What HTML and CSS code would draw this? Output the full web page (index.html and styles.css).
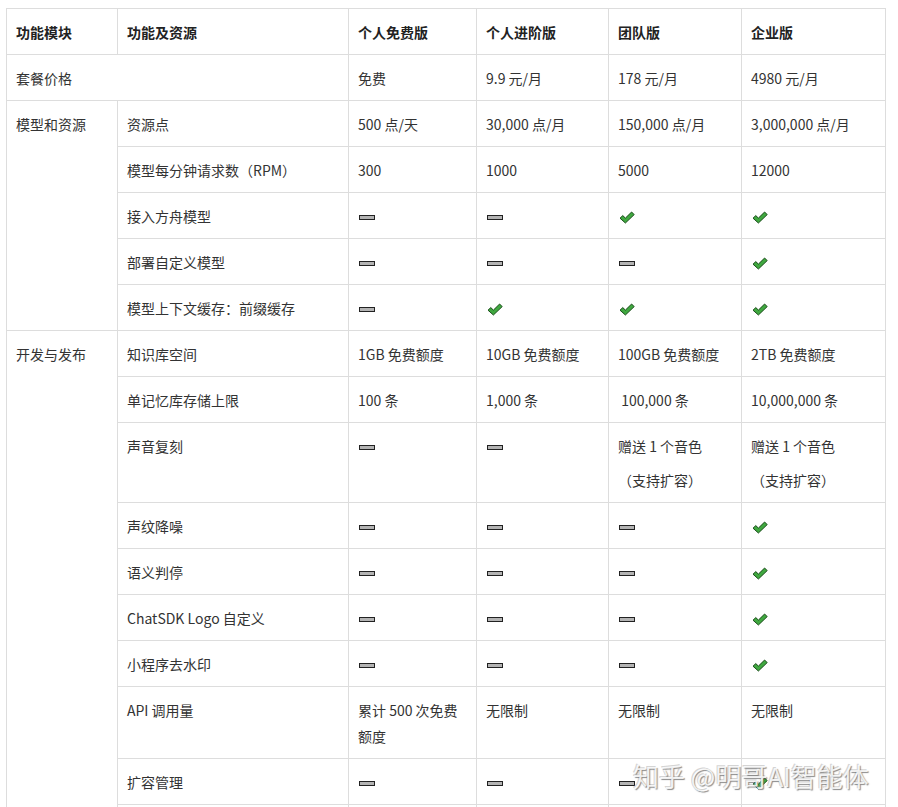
FILE: index.html
```html
<!DOCTYPE html>
<html lang="zh-CN">
<head>
<meta charset="utf-8">
<title>版本对比</title>
<link rel="stylesheet" href="styles.css">
</head>
<body>
<svg width="0" height="0" class="defs">
  <defs>
    <symbol id="dash" viewBox="0 0 16 5"><rect x="0.5" y="0.5" width="15" height="4" fill="#b4b4b4" stroke="#222" stroke-width="1"/></symbol>
    <symbol id="check" viewBox="0 0 16 13"><polygon points="1,7.2 3.8,4.6 6.4,7.1 12.6,1 15.2,3.6 6.4,12" fill="#3fa83f" stroke="#1b4d1b" stroke-width="1" stroke-linejoin="round"/></symbol>
  </defs>
</svg>
<div class="wrap">
<table class="cmp">
  <colgroup>
    <col class="c1"><col class="c2"><col class="c3"><col class="c4"><col class="c5"><col class="c6">
  </colgroup>
  <thead>
    <tr><th>功能模块</th><th>功能及资源</th><th>个人免费版</th><th>个人进阶版</th><th>团队版</th><th>企业版</th></tr>
  </thead>
  <tbody>
    <tr><td colspan="2">套餐价格</td><td>免费</td><td>9.9 元/月</td><td>178 元/月</td><td>4980 元/月</td></tr>
    <tr><td rowspan="5">模型和资源</td><td>资源点</td><td>500 点/天</td><td>30,000 点/月</td><td>150,000 点/月</td><td>3,000,000 点/月</td></tr>
    <tr><td>模型每分钟请求数（RPM）</td><td>300</td><td>1000</td><td>5000</td><td>12000</td></tr>
    <tr><td>接入方舟模型</td>
      <td><svg class="ic dash"><use href="#dash"/></svg></td>
      <td><svg class="ic dash"><use href="#dash"/></svg></td>
      <td><svg class="ic ok"><use href="#check"/></svg></td>
      <td><svg class="ic ok"><use href="#check"/></svg></td></tr>
    <tr><td>部署自定义模型</td>
      <td><svg class="ic dash"><use href="#dash"/></svg></td>
      <td><svg class="ic dash"><use href="#dash"/></svg></td>
      <td><svg class="ic dash"><use href="#dash"/></svg></td>
      <td><svg class="ic ok"><use href="#check"/></svg></td></tr>
    <tr><td>模型上下文缓存：前缀缓存</td>
      <td><svg class="ic dash"><use href="#dash"/></svg></td>
      <td><svg class="ic ok"><use href="#check"/></svg></td>
      <td><svg class="ic ok"><use href="#check"/></svg></td>
      <td><svg class="ic ok"><use href="#check"/></svg></td></tr>
    <tr><td rowspan="11">开发与发布</td><td>知识库空间</td><td>1GB 免费额度</td><td>10GB 免费额度</td><td>100GB 免费额度</td><td>2TB 免费额度</td></tr>
    <tr><td>单记忆库存储上限</td><td>100 条</td><td>1,000 条</td><td>&nbsp;100,000 条</td><td>10,000,000 条</td></tr>
    <tr><td>声音复刻</td>
      <td><svg class="ic dash"><use href="#dash"/></svg></td>
      <td><svg class="ic dash"><use href="#dash"/></svg></td>
      <td><p class="para">赠送 1 个音色</p><p class="para">（支持扩容）</p></td>
      <td><p class="para">赠送 1 个音色</p><p class="para">（支持扩容）</p></td></tr>
    <tr><td>声纹降噪</td>
      <td><svg class="ic dash"><use href="#dash"/></svg></td>
      <td><svg class="ic dash"><use href="#dash"/></svg></td>
      <td><svg class="ic dash"><use href="#dash"/></svg></td>
      <td><svg class="ic ok"><use href="#check"/></svg></td></tr>
    <tr><td>语义判停</td>
      <td><svg class="ic dash"><use href="#dash"/></svg></td>
      <td><svg class="ic dash"><use href="#dash"/></svg></td>
      <td><svg class="ic dash"><use href="#dash"/></svg></td>
      <td><svg class="ic ok"><use href="#check"/></svg></td></tr>
    <tr><td>ChatSDK Logo 自定义</td>
      <td><svg class="ic dash"><use href="#dash"/></svg></td>
      <td><svg class="ic dash"><use href="#dash"/></svg></td>
      <td><svg class="ic dash"><use href="#dash"/></svg></td>
      <td><svg class="ic ok"><use href="#check"/></svg></td></tr>
    <tr><td>小程序去水印</td>
      <td><svg class="ic dash"><use href="#dash"/></svg></td>
      <td><svg class="ic dash"><use href="#dash"/></svg></td>
      <td><svg class="ic dash"><use href="#dash"/></svg></td>
      <td><svg class="ic ok"><use href="#check"/></svg></td></tr>
    <tr><td>API 调用量</td><td>累计 500 次免费额度</td><td>无限制</td><td>无限制</td><td>无限制</td></tr>
    <tr><td>扩容管理</td>
      <td><svg class="ic dash"><use href="#dash"/></svg></td>
      <td><svg class="ic dash"><use href="#dash"/></svg></td>
      <td><svg class="ic dash"><use href="#dash"/></svg></td>
      <td><svg class="ic ok"><use href="#check"/></svg></td></tr>
    <tr class="tail"><td></td><td></td><td></td><td></td><td></td></tr>
  </tbody>
</table>
<div class="watermark">知乎 @明哥AI智能体</div>
</div>
</body>
</html>
```
FILE: styles.css
```css
html, body {
  background: #ffffff;
}
body {
  margin: 8px 0 0 6px;
  font-family: "Noto Sans CJK SC", "Noto Sans", sans-serif;
  font-size: 14px;
  color: #333333;
}
.defs {
  position: absolute;
  width: 0;
  height: 0;
  overflow: hidden;
}
.wrap {
  position: relative;
  width: 892px;
}
.cmp {
  border-collapse: collapse;
  table-layout: fixed;
  width: 879px;
}
.c1 { width: 111px; }
.c2 { width: 231px; }
.c3 { width: 128px; }
.c4 { width: 132px; }
.c5 { width: 133px; }
.c6 { width: 144px; }
.cmp th,
.cmp td {
  border: 1px solid #dddddd;
  padding: 10px 9px 9px 9px;
  line-height: 26px;
  text-align: left;
  vertical-align: top;
}
.cmp th {
  font-weight: 700;
  color: #222222;
}
.cmp .tail td {
  height: 26px;
}
.para {
  margin: 0;
}
.para + .para {
  margin-top: 8px;
}
.ic {
  display: inline-block;
  vertical-align: middle;
  position: relative;
  top: -1px;
}
.ic.dash {
  width: 16px;
  height: 5px;
  margin-left: 1px;
}
.ic.ok {
  width: 16px;
  height: 13px;
  margin-left: 1px;
}
.watermark {
  position: absolute;
  left: 627px;
  top: 748px;
  font-size: 26px;
  line-height: 40px;
  color: rgba(255, 255, 255, 0.85);
  text-shadow: 1px 1px 1px rgba(90, 90, 90, 0.7), -1px -1px 0 rgba(170, 170, 170, 0.5);
  white-space: nowrap;
}
```
